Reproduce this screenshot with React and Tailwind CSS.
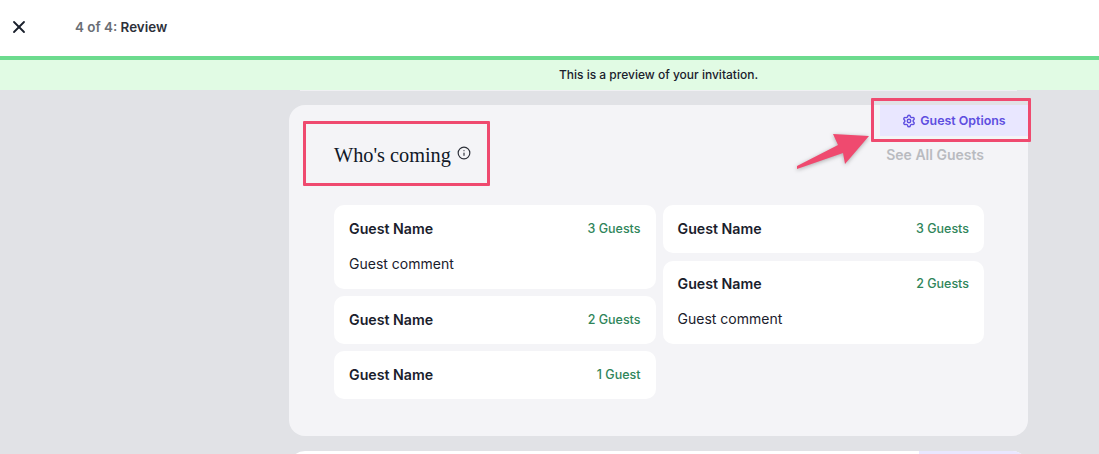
import { X, Info, Settings } from "lucide-react";

function GuestCard({ name, count, comment, top = "pt-[14px]" }) {
  return (
    <div className={`bg-white rounded-[10px] px-[15px] ${top} ${comment ? "pb-[15px]" : "pb-[14px]"}`}>
      <div className="flex items-center justify-between h-[20px]">
        <span className="text-[14.2px] font-semibold text-[#1a202c]">{name}</span>
        <span className="text-[12.5px] font-medium text-[#2f855a]">{count}</span>
      </div>
      {comment && <p className="mt-[15px] text-[14px] leading-[20px] text-[#1a202c]">{comment}</p>}
    </div>
  );
}

export default function App() {
  return (
    <div className="relative h-[454px] overflow-hidden bg-[#e1e2e6] font-['Inter',sans-serif]">
      <header className="h-[56px] pb-[2px] bg-white flex items-center">
        <X className="ml-[9px] -mt-[1px] w-[20px] h-[20px] text-[#1a202c]" strokeWidth={2.2} />
        <p className="ml-[46px] text-[13.4px] font-semibold text-[#6b6f76]">
          4 of 4: <span className="text-[#2d3039]">Review</span>
        </p>
      </header>
      <div className="h-[34px] border-t-[4px] border-[#6cdb8e] bg-[#e1fbe4] flex items-center">
        <p className="ml-[289px] w-[739px] text-center text-[12px] font-medium text-[#1a202c]">
          This is a preview of your invitation.
        </p>
      </div>

      <main className="w-[739px] ml-[289px]">
        <div className="mx-[11px] h-[1px] bg-[#f0f0f3]" />
        <section className="mt-[14px] h-[331px] rounded-[16px] bg-[#f4f4f7] pl-[45px] pr-[44px]">
          <div className="flex justify-between h-[100px]">
            <h2 className="mt-[37px] flex items-start font-['Liberation_Serif',serif] text-[20.3px] leading-[26px] text-[#111827]">
              Who's coming
              <Info className="ml-[6px] mt-[4px] w-[14px] h-[14px] text-[#2d3039]" strokeWidth={2} />
            </h2>
            <div className="flex flex-col items-end -mr-[44px]">
              <button className="w-[148px] h-[31px] pt-[1px] flex items-center justify-center gap-[4px] bg-[#e9e7ff] text-[#5d4ee0] text-[12.4px] font-semibold">
                <Settings className="w-[14px] h-[14px]" strokeWidth={2.4} />
                Guest Options
              </button>
              <span className="mt-[8px] mr-[44px] text-[14px] font-semibold text-[#b9bbc0]">See All Guests</span>
            </div>
          </div>
          <div className="grid grid-cols-2 gap-x-[7px] items-start">
            <div className="flex flex-col gap-[7px]">
              <GuestCard name="Guest Name" count="3 Guests" comment="Guest comment" />
              <GuestCard name="Guest Name" count="2 Guests" />
              <GuestCard name="Guest Name" count="1 Guest" />
            </div>
            <div className="flex flex-col gap-[8px]">
              <GuestCard name="Guest Name" count="3 Guests" />
              <GuestCard name="Guest Name" count="2 Guests" comment="Guest comment" top="pt-[13px]" />
            </div>
          </div>
        </section>
        <div className="mt-[15px] h-[40px] rounded-t-[16px] bg-white flex justify-end overflow-hidden">
          <div className="w-[109px] bg-[#e9e7ff]" />
        </div>
      </main>

      {/* annotation overlays */}
      <div className="absolute left-[303px] top-[121px] w-[187px] h-[65px] border-[3px] border-[#ef4a6f] rounded-[1px]" />
      <div className="absolute left-[871px] top-[98px] w-[160px] h-[44px] border-[3px] border-[#ef4a6f] rounded-[1px]" />
      <svg className="absolute left-[790px] top-[125px] w-[85px] h-[50px] drop-shadow-[0_1px_2px_rgba(0,0,0,0.3)]" viewBox="0 0 85 50">
        <path d="M7 41 L48 20 L43 9 L79 11 L55 39 L53 28 L7 44 Z" fill="#ef4a6f" />
      </svg>
    </div>
  );
}
